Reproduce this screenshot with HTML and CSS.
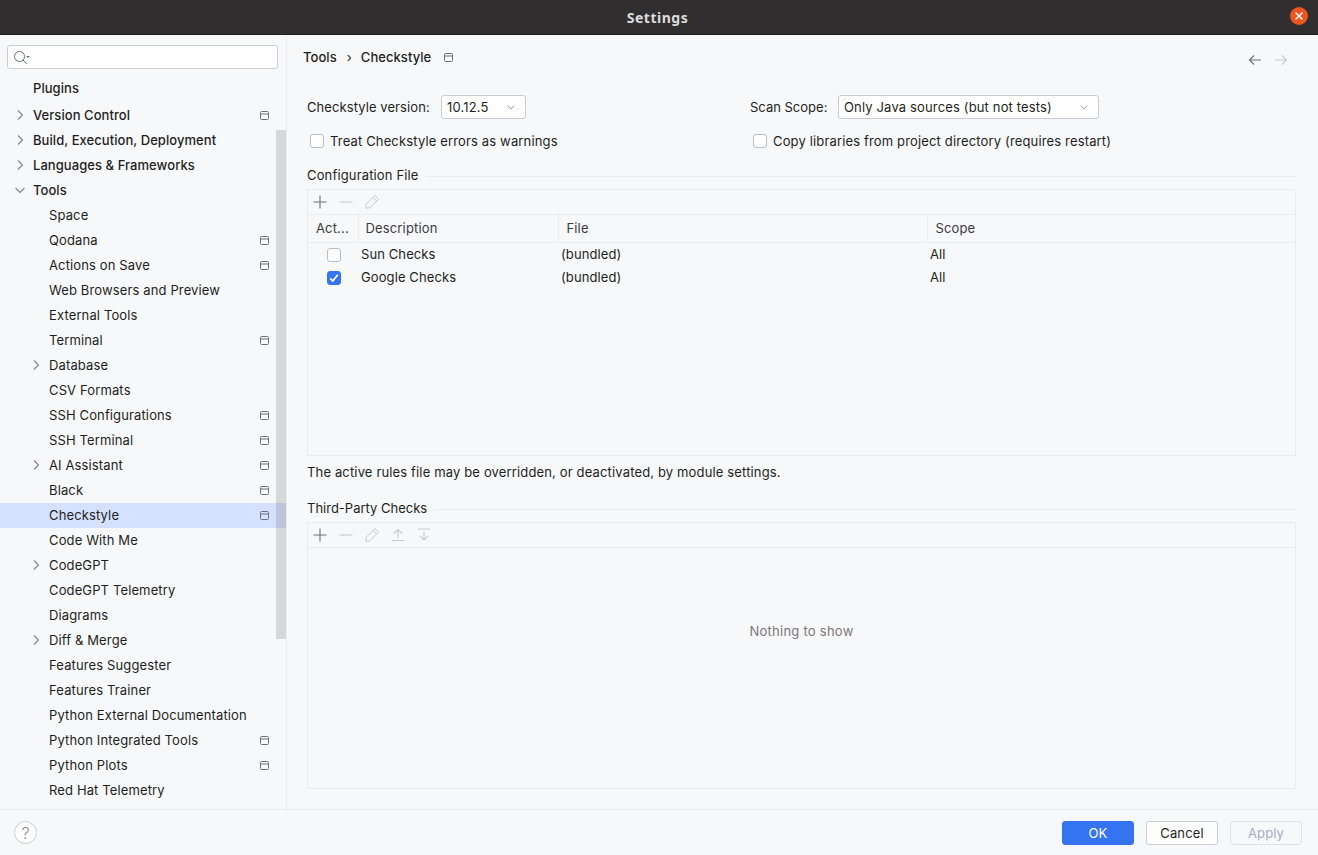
FILE: index.html
```html
<!DOCTYPE html>
<html lang="en">
<head>
    <meta charset="UTF-8">
    <meta name="viewport" content="width=device-width, initial-scale=1.0">
    <title>Settings</title>
    <link rel="stylesheet" href="styles.css">
</head>
<body>
    <svg class="defs" width="0" height="0">
        <symbol id="i-chev" viewBox="0 0 16 16"><path d="M6 3.5 10.5 8 6 12.5" fill="none" stroke="#7f8494" stroke-width="1.1"/></symbol>
        <symbol id="i-down" viewBox="0 0 16 16"><path d="M3.5 6 8 10.5 12.5 6" fill="none" stroke="#7f8494" stroke-width="1.1"/></symbol>
        <symbol id="i-proj" viewBox="0 0 9 9"><path d="M1.500.5h6a1 1 0 0 1 1 1v6a1 1 0 0 1-1 1h-6a1 1 0 0 1-1-1v-6a1 1 0 0 1 1-1ZM.5 3h8" fill="none" stroke="#6c707e"/></symbol>
        <symbol id="i-plus" viewBox="0 0 16 16"><path d="M8 1.500v13M1.500 8h13" fill="none" stroke="#6c707e" stroke-width="1.1"/></symbol>
        <symbol id="i-minus" viewBox="0 0 16 16"><path d="M1.500 8h13" fill="none" stroke="#c5c8d0" stroke-width="1.1"/></symbol>
        <symbol id="i-edit" viewBox="0 0 16 16"><path d="M10.800 1.500 14.500 5.200 6 13.700 1.800 14.200 2.300 10Z M9 3.300 12.700 7" fill="none" stroke="#c5c8d0"/></symbol>
        <symbol id="i-up" viewBox="0 0 16 16"><path d="M8 11V2.500M3.800 6.700 8 2.500l4.200 4.200M2 13.500h12" fill="none" stroke="#c5c8d0" stroke-width="1.1"/></symbol>
        <symbol id="i-dn" viewBox="0 0 16 16"><path d="M8 4.500V13M3.800 8.800 8 13l4.200-4.200M2 2h12" fill="none" stroke="#c5c8d0" stroke-width="1.1"/></symbol>
    </svg>

    <header class="titlebar">
        <span class="title">Settings</span>
        <span class="close">
            <svg width="10" height="10" viewBox="0 0 10 10"><path d="M1.500 1.500l7 7M8.500 1.500l-7 7" stroke="#fff" stroke-width="1.500"/></svg>
        </span>
    </header>

    <div class="main">
        <aside class="sidebar">
            <div class="search">
                <svg width="18" height="14" viewBox="0 0 18 14"><circle cx="5.500" cy="6.500" r="5" fill="none" stroke="#6c707e"/><path d="M9 10l4 4" stroke="#6c707e"/><path d="M12 6h4l-2 2z" fill="#6c707e"/></svg>
            </div>
            <ul class="tree">
                <li class="row top plugins"><span class="label">Plugins</span></li>
                <li class="row top"><svg class="arrow"><use href="#i-chev"/></svg><span class="label">Version Control</span><svg class="proj"><use href="#i-proj"/></svg></li>
                <li class="row top"><svg class="arrow"><use href="#i-chev"/></svg><span class="label">Build, Execution, Deployment</span></li>
                <li class="row top"><svg class="arrow"><use href="#i-chev"/></svg><span class="label">Languages &amp; Frameworks</span></li>
                <li class="row top"><svg class="arrow"><use href="#i-down"/></svg><span class="label">Tools</span></li>
                <li class="row sub"><span class="label">Space</span></li>
                <li class="row sub"><span class="label">Qodana</span><svg class="proj"><use href="#i-proj"/></svg></li>
                <li class="row sub"><span class="label">Actions on Save</span><svg class="proj"><use href="#i-proj"/></svg></li>
                <li class="row sub"><span class="label">Web Browsers and Preview</span></li>
                <li class="row sub"><span class="label">External Tools</span></li>
                <li class="row sub"><span class="label">Terminal</span><svg class="proj"><use href="#i-proj"/></svg></li>
                <li class="row sub"><svg class="arrow"><use href="#i-chev"/></svg><span class="label">Database</span></li>
                <li class="row sub"><span class="label">CSV Formats</span></li>
                <li class="row sub"><span class="label">SSH Configurations</span><svg class="proj"><use href="#i-proj"/></svg></li>
                <li class="row sub"><span class="label">SSH Terminal</span><svg class="proj"><use href="#i-proj"/></svg></li>
                <li class="row sub"><svg class="arrow"><use href="#i-chev"/></svg><span class="label">AI Assistant</span><svg class="proj"><use href="#i-proj"/></svg></li>
                <li class="row sub"><span class="label">Black</span><svg class="proj"><use href="#i-proj"/></svg></li>
                <li class="row sub selected"><span class="label">Checkstyle</span><svg class="proj"><use href="#i-proj"/></svg></li>
                <li class="row sub"><span class="label">Code With Me</span></li>
                <li class="row sub"><svg class="arrow"><use href="#i-chev"/></svg><span class="label">CodeGPT</span></li>
                <li class="row sub"><span class="label">CodeGPT Telemetry</span></li>
                <li class="row sub"><span class="label">Diagrams</span></li>
                <li class="row sub"><svg class="arrow"><use href="#i-chev"/></svg><span class="label">Diff &amp; Merge</span></li>
                <li class="row sub"><span class="label">Features Suggester</span></li>
                <li class="row sub"><span class="label">Features Trainer</span></li>
                <li class="row sub"><span class="label">Python External Documentation</span></li>
                <li class="row sub"><span class="label">Python Integrated Tools</span><svg class="proj"><use href="#i-proj"/></svg></li>
                <li class="row sub"><span class="label">Python Plots</span><svg class="proj"><use href="#i-proj"/></svg></li>
                <li class="row sub"><span class="label">Red Hat Telemetry</span></li>
            </ul>
            <div class="scrollbar"></div>
        </aside>

        <section class="content">
            <div class="crumbs">
                <span class="crumb">Tools</span>
                <span class="crumb-sep">›</span>
                <span class="crumb">Checkstyle</span>
                <svg class="proj crumb-icon"><use href="#i-proj"/></svg>
                <span class="nav">
                    <svg width="16" height="16" viewBox="0 0 16 16"><path d="M14 8H2.500M7 3.500 2.500 8 7 12.500" fill="none" stroke="#6c707e" stroke-width="1.1"/></svg>
                    <svg width="16" height="16" viewBox="0 0 16 16"><path d="M2 8h11.500M9 3.500 13.500 8 9 12.500" fill="none" stroke="#c5c8d0" stroke-width="1.1"/></svg>
                </span>
            </div>

            <div class="form">
                <div class="form-row">
                    <div class="col-left">
                        <label class="field-label">Checkstyle version:</label>
                        <div class="combo version"><span>10.12.5</span><svg class="combo-arrow"><use href="#i-down"/></svg></div>
                    </div>
                    <div class="col-right">
                        <label class="field-label">Scan Scope:</label>
                        <div class="combo scope"><span>Only Java sources (but not tests)</span><svg class="combo-arrow"><use href="#i-down"/></svg></div>
                    </div>
                </div>
                <div class="form-row check-row">
                    <div class="col-left"><span class="check"></span><span>Treat Checkstyle errors as warnings</span></div>
                    <div class="col-right"><span class="check"></span><span>Copy libraries from project directory (requires restart)</span></div>
                </div>

                <div class="group-title"><span>Configuration File</span><i></i></div>
                <div class="panel config">
                    <div class="toolbar">
                        <svg class="tool"><use href="#i-plus"/></svg>
                        <svg class="tool"><use href="#i-minus"/></svg>
                        <svg class="tool"><use href="#i-edit"/></svg>
                    </div>
                    <table class="grid">
                        <thead>
                            <tr>
                                <th class="c-act">Act...</th>
                                <th class="c-desc">Description</th>
                                <th class="c-file">File</th>
                                <th class="c-scope">Scope</th>
                            </tr>
                        </thead>
                        <tbody>
                            <tr>
                                <td class="cell-check"><span class="check"></span></td>
                                <td>Sun Checks</td>
                                <td>(bundled)</td>
                                <td>All</td>
                            </tr>
                            <tr>
                                <td class="cell-check">
                                    <span class="check on"><svg width="14" height="14" viewBox="0 0 14 14"><path d="M3.200 7.300 5.800 10 10.800 3.800" fill="none" stroke="#fff" stroke-width="1.800"/></svg></span>
                                </td>
                                <td>Google Checks</td>
                                <td>(bundled)</td>
                                <td>All</td>
                            </tr>
                        </tbody>
                    </table>
                </div>
                <p class="note">The active rules file may be overridden, or deactivated, by module settings.</p>

                <div class="group-title third"><span>Third-Party Checks</span><i></i></div>
                <div class="panel third-panel">
                    <div class="toolbar">
                        <svg class="tool"><use href="#i-plus"/></svg>
                        <svg class="tool"><use href="#i-minus"/></svg>
                        <svg class="tool"><use href="#i-edit"/></svg>
                        <svg class="tool"><use href="#i-up"/></svg>
                        <svg class="tool"><use href="#i-dn"/></svg>
                    </div>
                    <div class="empty">Nothing to show</div>
                </div>
            </div>
        </section>
    </div>

    <footer class="footer">
        <span class="help">?</span>
        <div class="buttons">
            <button class="btn primary">OK</button>
            <button class="btn">Cancel</button>
            <button class="btn disabled">Apply</button>
        </div>
    </footer>
</body>
</html>
```

FILE: styles.css
```css
* {
    box-sizing: border-box;
}
html, body {
    height: 100%;
}
body {
    margin: 0;
    height: 855px;
    overflow: hidden;
    display: flex;
    flex-direction: column;
    background-color: #f7f8fa;
    color: #1e1f22;
    font-family: Inter, "Liberation Sans", sans-serif;
    font-size: 13px;
    letter-spacing: 0.15px;
}
.defs {
    position: absolute;
}

/* title bar */
.titlebar {
    height: 35px;
    flex: none;
    display: flex;
    align-items: center;
    justify-content: center;
    position: relative;
    background-color: #302e2e;
    border-bottom: 1px solid #1f1e1e;
}
.title {
    margin-left: -3px;
    color: #dcdcdc;
    font-family: "Noto Sans", sans-serif;
    font-size: 14px;
    font-weight: 700;
    letter-spacing: 0.5px;
}
.close {
    position: absolute;
    left: 1290px;
    top: 7px;
    width: 18px;
    height: 18px;
    border-radius: 50%;
    background-color: #ee5420;
    display: flex;
    align-items: center;
    justify-content: center;
}

.main {
    height: 774px;
    flex: none;
    display: flex;
}

/* left tree */
.sidebar {
    width: 287px;
    flex: none;
    position: relative;
    border-right: 1px solid #ebecf0;
    overflow: hidden;
}
.search {
    height: 24px;
    margin: 10px 8px 0 7px;
    padding-left: 6px;
    display: flex;
    align-items: center;
    background-color: #fff;
    border: 1px solid #c9ccd6;
    border-radius: 3px;
}
.tree {
    list-style: none;
    margin: 7px 0 0;
    padding: 0;
}
.row {
    height: 25px;
    display: flex;
    align-items: center;
    position: relative;
    padding-right: 16px;
    padding-bottom: 2px;
    white-space: nowrap;
    letter-spacing: 0.13px;
}
.row.top {
    padding-left: 33px;
    letter-spacing: 0.06px;
}
.row.sub {
    padding-left: 49px;
}
.row.plugins {
    margin-bottom: 2px;
}
.row.top, .crumb {
    font-weight: 500;
}
.crumb {
    letter-spacing: 0.05px;
}
.row.selected {
    background-color: #d5e1ff;
}
.arrow {
    position: absolute;
    left: 12px;
    top: 4px;
    width: 16px;
    height: 16px;
}
.row.sub .arrow {
    left: 28px;
}
.proj {
    width: 9px;
    height: 9px;
    flex: none;
}
.row .proj {
    position: absolute;
    left: 260px;
    top: 8px;
}
.scrollbar {
    position: absolute;
    left: 276px;
    top: 95px;
    width: 10px;
    height: 509px;
    background-color: rgba(115, 115, 115, 0.25);
}

/* right side */
.content {
    flex: 1;
    min-width: 0;
    padding: 0 22px 0 16px;
}
.crumbs {
    height: 44px;
    display: flex;
    align-items: center;
}
.crumb-sep {
    margin: 0 9px 0 10px;
}
.crumb-icon {
    margin-left: 13px;
}
.nav {
    margin-left: auto;
    margin-right: 7px;
    display: flex;
    gap: 10px;
    padding-top: 5px;
}
.form {
    padding: 16px 0 0 4px;
}
.form-row {
    display: flex;
    align-items: center;
}
.col-left {
    width: 443px;
    flex: none;
    display: flex;
    align-items: center;
}
.col-right {
    flex: 1;
    display: flex;
    align-items: center;
}
.col-left .field-label {
    width: 134px;
    flex: none;
    white-space: nowrap;
    letter-spacing: 0.08px;
}
.col-right .field-label {
    width: 88px;
    flex: none;
    white-space: nowrap;
    letter-spacing: 0;
}
.combo {
    height: 24px;
    padding: 0 8px 0 5px;
    display: flex;
    align-items: center;
    justify-content: space-between;
    background-color: #fff;
    border: 1px solid #c9ccd6;
    border-radius: 3px;
}
.version {
    width: 85px;
}
.scope {
    width: 261px;
}
.combo-arrow {
    width: 12px;
    height: 12px;
    flex: none;
}
.check-row {
    margin-top: 11px;
    height: 22px;
}
.check-row .check {
    margin: 0 6px 0 3px;
}
.check {
    width: 14px;
    height: 14px;
    flex: none;
    display: inline-block;
    background-color: #fff;
    border: 1px solid #b9bdc9;
    border-radius: 3px;
    vertical-align: middle;
}
.check.on {
    background-color: #3574f0;
    border-color: #3574f0;
    position: relative;
}
.check.on svg {
    position: absolute;
    left: -1px;
    top: -1px;
}
.group-title {
    margin-top: 15px;
    height: 16px;
    display: flex;
    align-items: center;
}
.group-title i {
    flex: 1;
    height: 1px;
    margin: 3px 0 0 7px;
    background-color: #ebecf0;
}
.panel {
    margin-top: 6px;
    border: 1px solid #ebecf0;
}
.config {
    height: 267px;
}
.third-panel {
    height: 267px;
    display: flex;
    flex-direction: column;
}
.toolbar {
    height: 25px;
    padding-left: 4px;
    display: flex;
    align-items: center;
    gap: 10px;
    border-bottom: 1px solid #ebecf0;
}
.tool {
    width: 16px;
    height: 16px;
}
.grid {
    width: 100%;
    table-layout: fixed;
    border-collapse: collapse;
}
.grid th {
    height: 27px;
    padding: 0 0 0 7px;
    font-weight: 400;
    text-align: left;
    color: #3a3b40;
    border-left: 1px solid #ebecf0;
    border-bottom: 1px solid #ebecf0;
}
.grid th:first-child {
    border-left: none;
    padding-left: 8px;
}
.grid th.c-file, .grid th.c-scope {
    padding-left: 8px;
}
.c-act {
    width: 50px;
}
.c-desc {
    width: 200px;
}
.c-file {
    width: 369px;
}
.grid td {
    height: 23px;
    padding: 0 0 0 3px;
    letter-spacing: 0.1px;
}
.grid td.cell-check {
    padding: 0 0 0 2px;
    text-align: center;
}
.note {
    margin: 8px 0 0;
    height: 16px;
    line-height: 16px;
}
.group-title.third {
    margin-top: 20px;
    letter-spacing: 0;
}
.empty {
    flex: 1;
    display: flex;
    align-items: center;
    justify-content: center;
    padding-bottom: 74px;
    color: #7d7679;
    letter-spacing: 0.25px;
}

/* bottom buttons */
.footer {
    flex: 1;
    display: flex;
    align-items: center;
    justify-content: space-between;
    padding: 0 16px 0 14px;
    border-top: 1px solid #ebecf0;
}
.help {
    width: 23px;
    height: 23px;
    display: flex;
    align-items: center;
    justify-content: center;
    background-color: #fff;
    border: 1px solid #c9ccd6;
    border-radius: 50%;
    color: #8a8e9b;
    font-size: 16px;
    font-weight: 300;
}
.buttons {
    display: flex;
    gap: 12px;
}
.btn {
    width: 72px;
    height: 24px;
    padding: 0;
    font: inherit;
    letter-spacing: inherit;
    color: #1e1f22;
    background-color: #fff;
    border: 1px solid #c9ccd6;
    border-radius: 3px;
}
.btn.primary {
    color: #fff;
    background-color: #3574f0;
    border-color: #3574f0;
}
.btn.disabled {
    color: #a8adbd;
    background-color: #f7f8fa;
    border-color: #dfe1e5;
}
```
